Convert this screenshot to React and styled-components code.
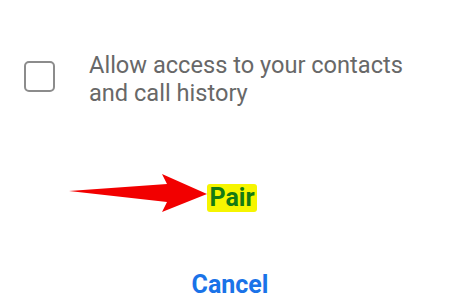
import React from "react";
import styled, { createGlobalStyle } from "styled-components";

const Global = createGlobalStyle`
  html, body { margin: 0; padding: 0; background: #ffffff; }
  body { font-family: Roboto, "Noto Sans", Arial, sans-serif; }
`;

const Page = styled.div`
  width: 460px;
  height: 301px;
  display: flex;
  flex-direction: column;
  overflow: hidden;
  background: #fff;
`;

const PermissionRow = styled.label`
  display: flex;
  align-items: flex-start;
  gap: 34px;
  padding: 51px 0 0 24px;
`;

const Checkbox = styled.span`
  flex: none;
  box-sizing: border-box;
  width: 31px;
  height: 31px;
  margin-top: 10px;
  border: 2px solid #8c8c8c;
  border-radius: 5px;
`;

const PermissionText = styled.span`
  font-size: 23.6px;
  line-height: 28px;
  color: #686868;
`;

const ActionRow = styled.div`
  display: flex;
  justify-content: center;
  margin-top: ${(p) => p.$gap}px;
  padding-left: ${(p) => p.$shift || 0}px;
`;

const ActionButton = styled.span`
  position: relative;
  display: inline-block;
  font-size: 25px;
  font-weight: 700;
  line-height: 28px;
  padding: 0 2px;
  color: ${(p) => p.$color};
  background: ${(p) => (p.$highlight ? "#f6f500" : "transparent")};
  border-radius: 3px;
`;

const Arrow = styled.svg`
  position: absolute;
  right: 100%;
  top: -10px;
  width: 140px;
  height: 40px;
  overflow: visible;
`;

export default function App() {
  return (
    <>
      <Global />
      <Page>
        <PermissionRow>
          <Checkbox />
          <PermissionText>
            Allow access to your contacts
            <br />
            and call history
          </PermissionText>
        </PermissionRow>
        <ActionRow $gap={77} $shift={4}>
          <ActionButton $color="#147a14" $highlight>
            <Arrow viewBox="0 0 140 40">
              <polygon
                points="2,17 100,10 95,0 140,20 95,38 100,28"
                fill="#f20000"
              />
            </Arrow>
            Pair
          </ActionButton>
        </ActionRow>
        <ActionRow $gap={59}>
          <ActionButton $color="#1a73e8">Cancel</ActionButton>
        </ActionRow>
      </Page>
    </>
  );
}
